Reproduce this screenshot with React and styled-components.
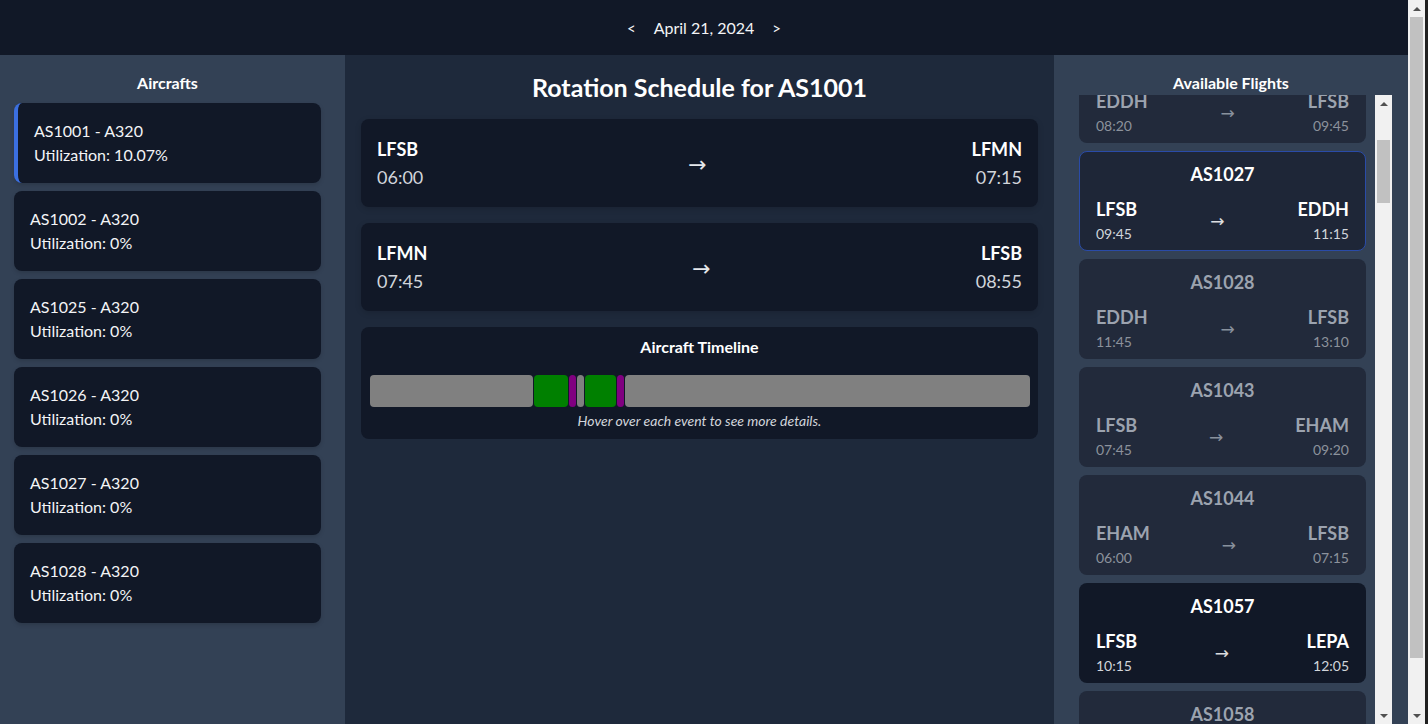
import React, { useLayoutEffect, useRef, useState } from 'react'
import styled, { createGlobalStyle, css } from 'styled-components'

const GlobalStyle = createGlobalStyle`
  * { box-sizing: border-box; }
  html, body { margin: 0; padding: 0; scrollbar-width: none; }
  body {
    background: #1e293b;
    color: #ffffff;
    font-family: Lato, 'Noto Sans', sans-serif;
  }
`

const aircrafts = [
  { id: 'AS1001', type: 'A320', util: '10.07%', active: true },
  { id: 'AS1002', type: 'A320', util: '0%' },
  { id: 'AS1025', type: 'A320', util: '0%' },
  { id: 'AS1026', type: 'A320', util: '0%' },
  { id: 'AS1027', type: 'A320', util: '0%' },
  { id: 'AS1028', type: 'A320', util: '0%' },
]

const rotation = [
  { from: 'LFSB', to: 'LFMN', dep: '06:00', arr: '07:15' },
  { from: 'LFMN', to: 'LFSB', dep: '07:45', arr: '08:55' },
]

// hours of the day, 0..24
const events = [
  { kind: 'idle', start: 0, end: 6 },
  { kind: 'flight', start: 6, end: 7.25 },
  { kind: 'turn', start: 7.25, end: 7.5 },
  { kind: 'idle', start: 7.5, end: 7.75 },
  { kind: 'flight', start: 7.75, end: 8.9167 },
  { kind: 'turn', start: 8.9167, end: 9.1667 },
  { kind: 'idle', start: 9.1667, end: 24 },
]

const shown = [
  { no: 'AS1003', from: 'LFSB', to: 'LFPG', dep: '06:10', arr: '07:25', state: 'dim' },
  { no: 'AS1004', from: 'LFPG', to: 'LFSB', dep: '08:05', arr: '09:20', state: 'dim' },
  { no: 'AS1026', from: 'EDDH', to: 'LFSB', dep: '08:20', arr: '09:45', state: 'dim' },
  { no: 'AS1027', from: 'LFSB', to: 'EDDH', dep: '09:45', arr: '11:15', state: 'selected' },
  { no: 'AS1028', from: 'EDDH', to: 'LFSB', dep: '11:45', arr: '13:10', state: 'dim' },
  { no: 'AS1043', from: 'LFSB', to: 'EHAM', dep: '07:45', arr: '09:20', state: 'dim' },
  { no: 'AS1044', from: 'EHAM', to: 'LFSB', dep: '06:00', arr: '07:15', state: 'dim' },
  { no: 'AS1057', from: 'LFSB', to: 'LEPA', dep: '10:15', arr: '12:05', state: 'open' },
  { no: 'AS1058', from: 'LEPA', to: 'LFSB', dep: '12:50', arr: '14:40', state: 'dim' },
]

const airports = ['LFSB', 'LEPA', 'EHAM', 'EDDH', 'LFMN', 'LIRF', 'EGLL', 'LEMD']
const pad = n => String(n).padStart(2, '0')
const extra = Array.from({ length: 46 }, (_, i) => {
  const out = i % 2 === 0
  const other = airports[1 + (i >> 1) % (airports.length - 1)]
  const h = 6 + (i * 3) % 14
  return {
    no: `AS${1059 + i}`,
    from: out ? 'LFSB' : other,
    to: out ? other : 'LFSB',
    dep: `${pad(h)}:${pad((i * 25) % 60)}`,
    arr: `${pad(h + 1)}:${pad((i * 25 + 35) % 60)}`,
    state: i % 3 === 1 ? 'open' : 'dim',
  }
})
const flights = [...shown, ...extra]

const thumbOf = (view, total, track) => {
  const size = Math.max(20, (track * view) / total)
  return { size, ratio: track / total }
}

const App = () => {
  const listRef = useRef()
  const listTrack = useRef()
  const pageTrack = useRef()
  const [listThumb, setListThumb] = useState({ top: 0, height: 0 })
  const [pageThumb, setPageThumb] = useState({ top: 0, height: 0 })

  useLayoutEffect(() => {
    const list = listRef.current
    list.scrollTop = 276
    const t = listTrack.current.clientHeight
    const lt = thumbOf(list.clientHeight, list.scrollHeight, t)
    setListThumb({ top: list.scrollTop * lt.ratio, height: lt.size })

    const doc = document.documentElement
    const pt = pageTrack.current.clientHeight
    const p = thumbOf(window.innerHeight, doc.scrollHeight, pt)
    setPageThumb({ top: 0, height: p.size })
  }, [])

  return (
    <Page>
      <GlobalStyle />
      <Content>
        <Header>
          <NavButton>&lt;</NavButton>
          <DateLabel>April 21, 2024</DateLabel>
          <NavButton>&gt;</NavButton>
        </Header>
        <Main>
          <SidePanel left>
            <PanelTitle>Aircrafts</PanelTitle>
            <AircraftList>
              {aircrafts.map(a => (
                <AircraftCard key={a.id} active={a.active}>
                  <div>{a.id} - {a.type}</div>
                  <div>Utilization: {a.util}</div>
                </AircraftCard>
              ))}
            </AircraftList>
          </SidePanel>

          <Center>
            <Title>Rotation Schedule for AS1001</Title>
            {rotation.map(r => (
              <LegCard key={r.from + r.dep}>
                <Stop>
                  <Code>{r.from}</Code>
                  <Time>{r.dep}</Time>
                </Stop>
                <BigArrow>→</BigArrow>
                <Stop end>
                  <Code>{r.to}</Code>
                  <Time>{r.arr}</Time>
                </Stop>
              </LegCard>
            ))}
            <TimelineBox>
              <TimelineTitle>Aircraft Timeline</TimelineTitle>
              <Bar>
                {events.map((e, i) => (
                  <Segment key={i} kind={e.kind} style={{ flexGrow: e.end - e.start }} />
                ))}
              </Bar>
              <Hint>Hover over each event to see more details.</Hint>
            </TimelineBox>
          </Center>

          <SidePanel right>
            <PanelTitle flush>Available Flights</PanelTitle>
            <ListRow>
              <FlightList ref={listRef}>
                {flights.map(f => (
                  <FlightCard key={f.no} state={f.state}>
                    <FlightNo>{f.no}</FlightNo>
                    <Route>
                      <Stop>
                        <SmallCode>{f.from}</SmallCode>
                        <SmallTime>{f.dep}</SmallTime>
                      </Stop>
                      <SmallArrow>→</SmallArrow>
                      <Stop end>
                        <SmallCode>{f.to}</SmallCode>
                        <SmallTime>{f.arr}</SmallTime>
                      </Stop>
                    </Route>
                  </FlightCard>
                ))}
              </FlightList>
              <Rail>
                <RailArrow up />
                <RailTrack ref={listTrack}>
                  <Thumb style={{ top: listThumb.top, height: listThumb.height }} />
                </RailTrack>
                <RailArrow />
              </Rail>
            </ListRow>
          </SidePanel>
        </Main>
      </Content>
      <PageRail>
        <RailArrow up />
        <RailTrack ref={pageTrack}>
          <Thumb style={{ top: pageThumb.top, height: pageThumb.height }} />
        </RailTrack>
        <RailArrow />
      </PageRail>
    </Page>
  )
}

const Page = styled.div`
  display: flex;
  align-items: flex-start;
`

const Content = styled.div`
  flex: 1;
  min-width: 0;
`

const Header = styled.header`
  height: 55px;
  background: #111827;
  display: flex;
  align-items: center;
  justify-content: center;
  gap: 18px;
  color: #f3f4f6;
`

const NavButton = styled.button`
  background: none;
  border: none;
  color: #f3f4f6;
  font-family: inherit;
  font-size: 15px;
  padding: 0;
  cursor: pointer;
`

const DateLabel = styled.span`
  font-size: 16px;
`

const Main = styled.main`
  display: flex;
  height: 100vh;
`

const SidePanel = styled.aside`
  background: #334155;
  flex: none;
  ${p => p.left && css`
    width: 345px;
    padding: 16px 24px 16px 14px;
  `}
  ${p => p.right && css`
    width: 354px;
    padding: 16px 16px 0 16px;
  `}
`

const PanelTitle = styled.h2`
  margin: 0 0 ${p => (p.flush ? 0 : 8)}px;
  font-size: 16px;
  line-height: 24px;
  font-weight: 700;
  text-align: center;
`

const AircraftList = styled.div`
  display: flex;
  flex-direction: column;
  gap: 8px;
`

const AircraftCard = styled.div`
  background: #111827;
  border-radius: 8px;
  padding: 16px;
  font-size: 16px;
  line-height: 24px;
  color: #f3f4f6;
  box-shadow: 0 2px 4px rgba(0, 0, 0, 0.15);
  ${p => p.active && css`
    border-left: 4px solid #3b6fe0;
  `}
`

const Center = styled.section`
  flex: 1;
  padding: 16px;
  display: flex;
  flex-direction: column;
  gap: 16px;
`

const Title = styled.h1`
  margin: 0;
  font-size: 25px;
  line-height: 32px;
  font-weight: 700;
  text-align: center;
`

const LegCard = styled.div`
  background: #111827;
  border-radius: 8px;
  padding: 16px;
  display: flex;
  align-items: center;
  justify-content: space-between;
  box-shadow: 0 2px 6px rgba(0, 0, 0, 0.15);
`

const Stop = styled.div`
  display: flex;
  flex-direction: column;
  align-items: ${p => (p.end ? 'flex-end' : 'flex-start')};
`

const Code = styled.span`
  font-size: 18px;
  line-height: 28px;
  font-weight: 700;
`

const Time = styled.span`
  font-size: 18px;
  line-height: 28px;
  color: #d1d5db;
`

const BigArrow = styled.span`
  font-size: 22px;
  line-height: 32px;
  padding-top: 3px;
  color: #e5e7eb;
  font-family: 'DejaVu Sans', sans-serif;
`

const TimelineBox = styled.div`
  background: #111827;
  border-radius: 8px;
  padding: 8px;
`

const TimelineTitle = styled.h3`
  margin: 0 0 16px;
  font-size: 16px;
  line-height: 24px;
  font-weight: 700;
  text-align: center;
`

const segColors = { idle: '#808080', flight: '#008000', turn: '#800080' }

const Bar = styled.div`
  display: flex;
  height: 32px;
`

const Segment = styled.div`
  flex-basis: 0;
  flex-shrink: 1;
  background: ${p => segColors[p.kind]};
  border-radius: 4px;
  margin: 0 0.5px;
`

const Hint = styled.p`
  margin: 4px 0 0;
  font-size: 14px;
  line-height: 20px;
  font-style: italic;
  text-align: center;
  color: #d1d5db;
`

const ListRow = styled.div`
  display: flex;
  height: calc(100vh - 95px);
`

const FlightList = styled.div`
  flex: 1;
  min-width: 0;
  overflow-y: scroll;
  scrollbar-width: none;
  padding: 8px 9px 8px 9px;
  display: flex;
  flex-direction: column;
  gap: 8px;
  &::-webkit-scrollbar { display: none; }
`

const FlightCard = styled.div`
  flex: none;
  border-radius: 8px;
  padding: 8px 16px 4px;
  border: 1px solid transparent;
  ${p => p.state === 'dim' && css`
    background: #222a3b;
    color: #9ca3af;
    --time: #8c929c;
  `}
  ${p => p.state === 'selected' && css`
    background: #1e2637;
    border-color: #2a4ba8;
    color: #ffffff;
    --time: #d1d5db;
  `}
  ${p => p.state === 'open' && css`
    background: #111827;
    color: #ffffff;
    --time: #d1d5db;
  `}
`

const FlightNo = styled.div`
  text-align: center;
  font-size: 18px;
  line-height: 28px;
  font-weight: 700;
  margin-bottom: 8px;
`

const Route = styled.div`
  display: flex;
  align-items: center;
  justify-content: space-between;
`

const SmallCode = styled.span`
  font-size: 18px;
  line-height: 26px;
  font-weight: 700;
`

const SmallTime = styled.span`
  font-size: 14px;
  line-height: 24px;
  color: var(--time);
`

const SmallArrow = styled.span`
  font-size: 17px;
  font-family: 'DejaVu Sans', sans-serif;
  opacity: 0.85;
`

const Rail = styled.div`
  flex: none;
  width: 17px;
  background: #f1f1f1;
  display: flex;
  flex-direction: column;
`

const PageRail = styled(Rail)`
  position: sticky;
  top: 0;
  width: 20px;
  height: 100vh;
  border-right: 3px solid #202020;
`

const RailArrow = styled.div`
  flex: none;
  height: 17px;
  display: flex;
  align-items: center;
  justify-content: center;
  &::before {
    content: '';
    width: 0;
    height: 0;
    border-left: 4px solid transparent;
    border-right: 4px solid transparent;
    ${p => (p.up
      ? css`border-bottom: 4px solid #505050;`
      : css`border-top: 4px solid #505050;`)}
  }
`

const RailTrack = styled.div`
  flex: 1;
  position: relative;
`

const Thumb = styled.div`
  position: absolute;
  left: 2px;
  right: 2px;
  background: #c1c1c1;
`

export default App
